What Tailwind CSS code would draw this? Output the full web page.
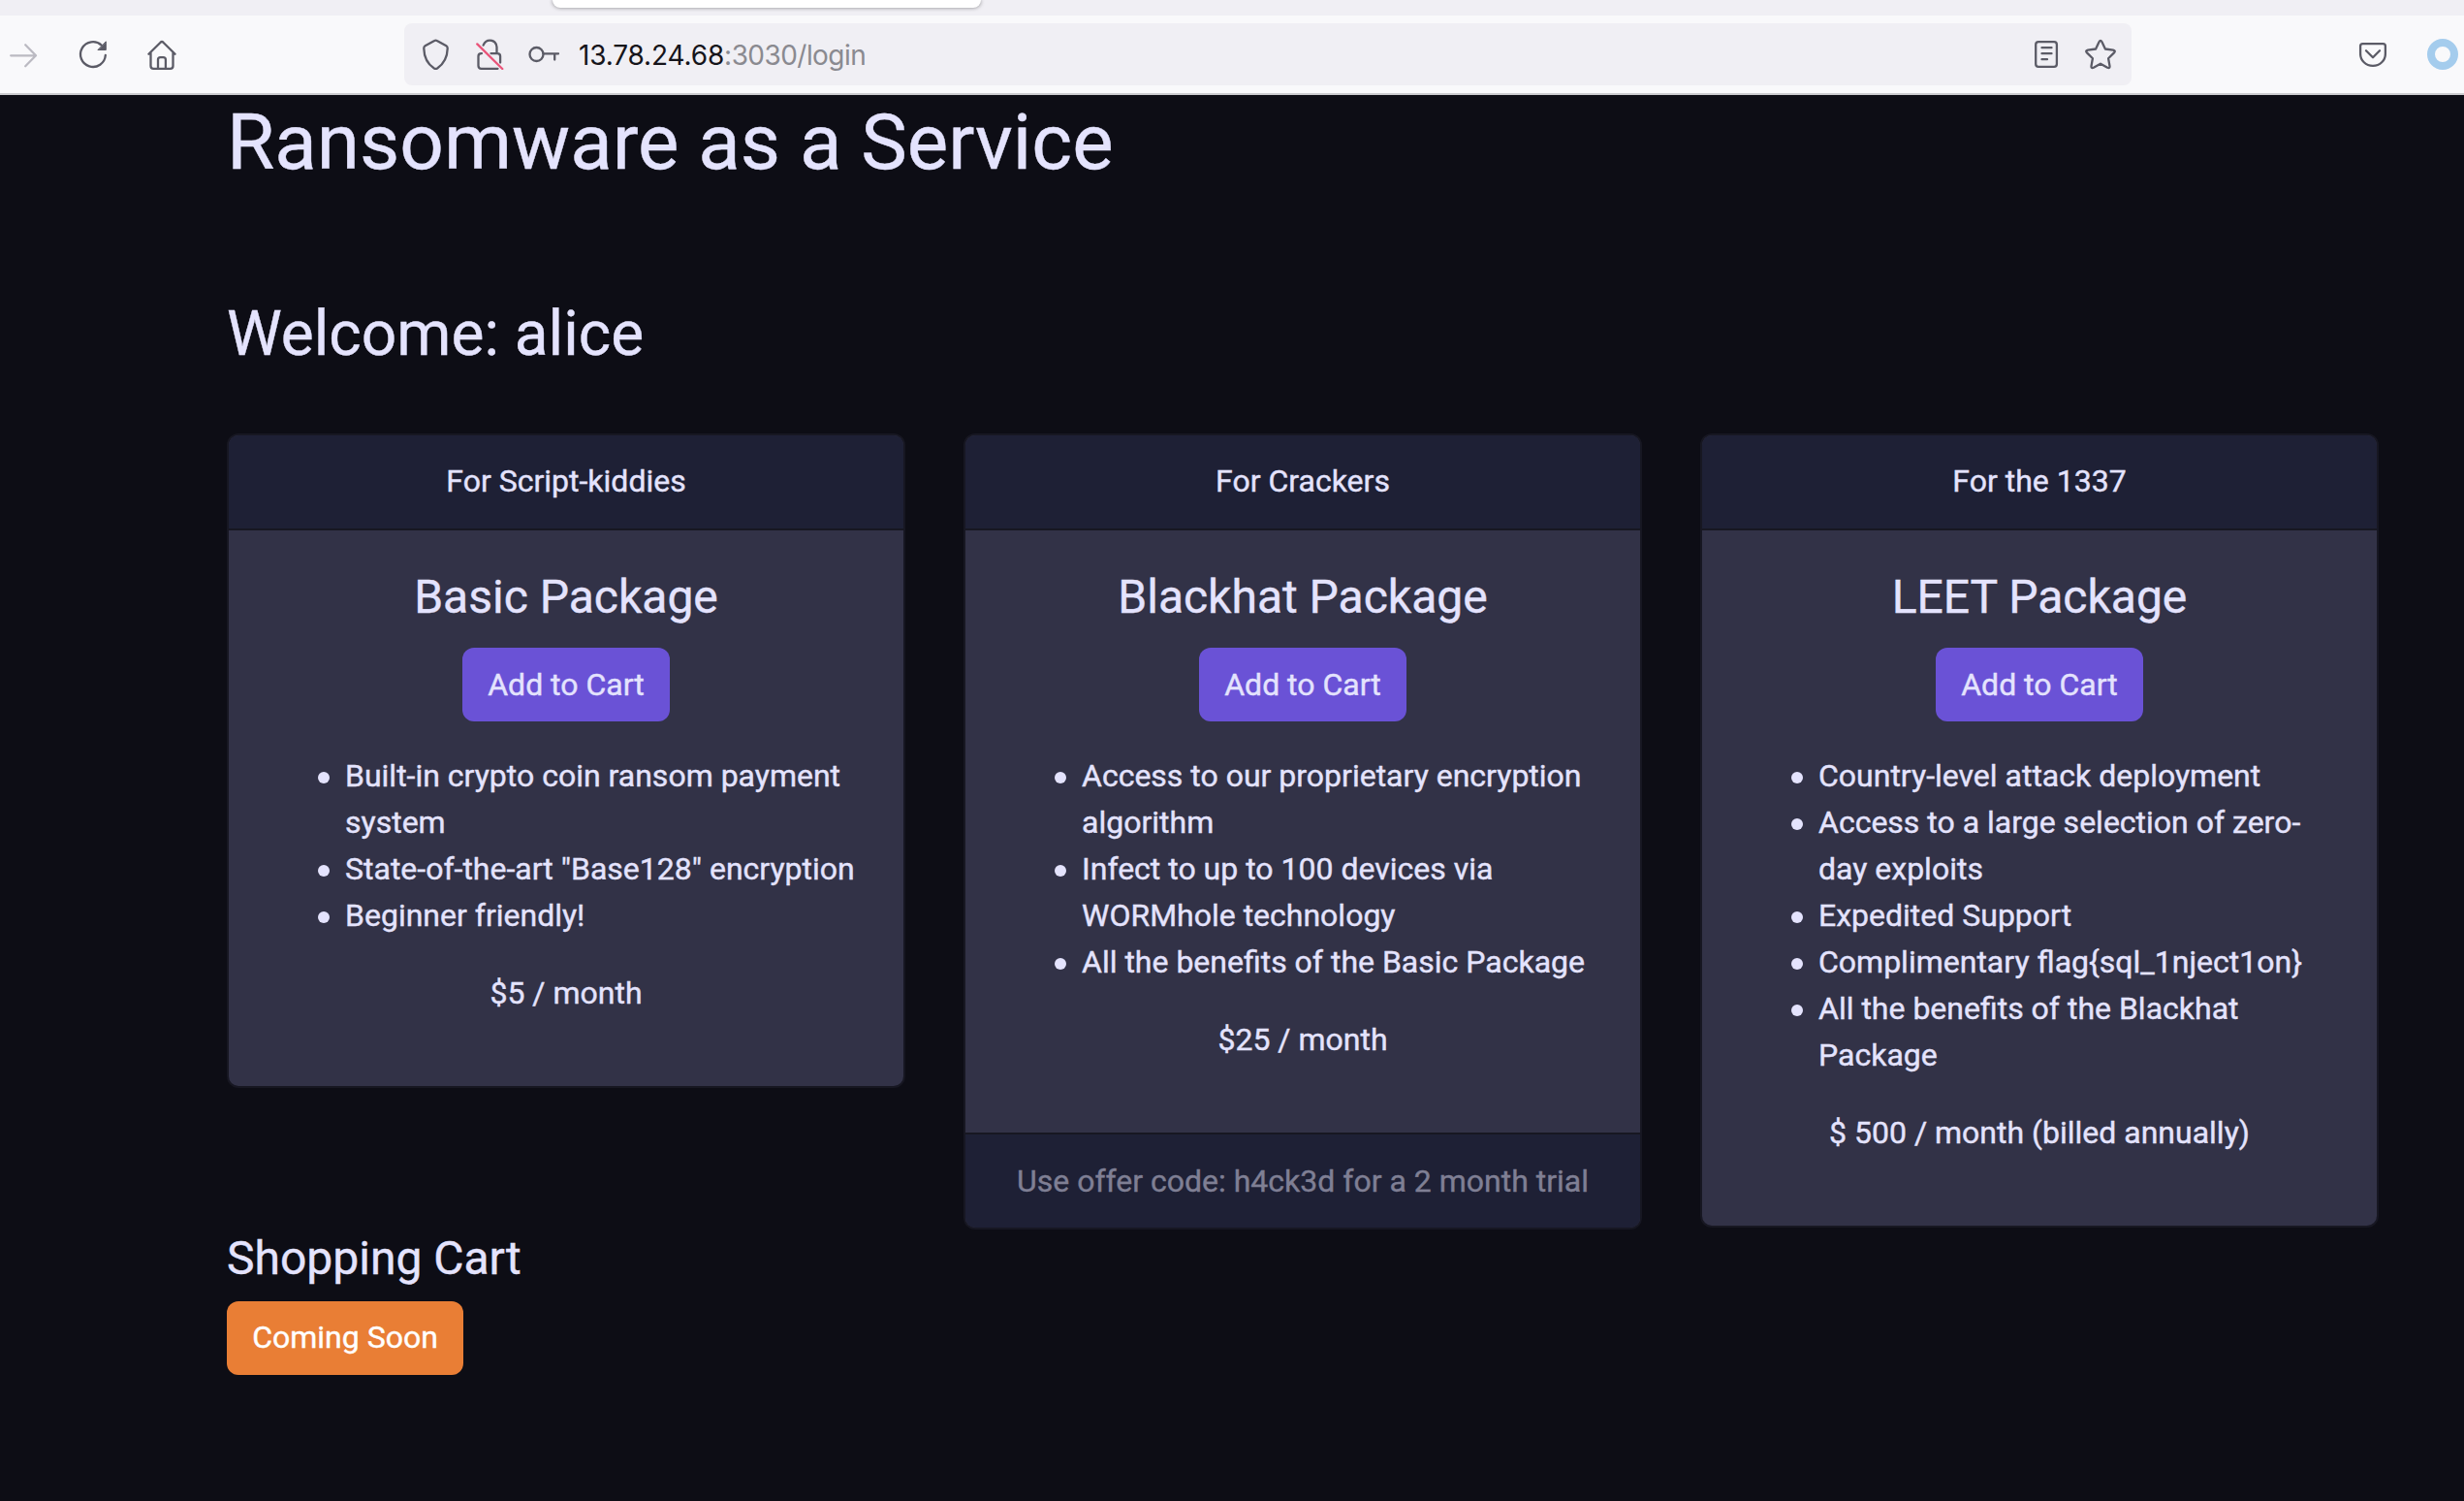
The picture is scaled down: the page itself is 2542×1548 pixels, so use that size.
<!DOCTYPE html>
<html lang="en">
<head>
<meta charset="utf-8">
<title>Ransomware as a Service</title>
<script src="https://cdn.jsdelivr.net/npm/@tailwindcss/browser@4"></script>
</head>
<body class="h-[1548px] w-[2542px] overflow-hidden bg-[#0d0d15] font-['Roboto',sans-serif] text-[32px] leading-[48px] text-[#e4e3fd]">

<!-- Browser chrome -->
<header class="border-b-2 border-[#cccccf] bg-[#f9f9fb] font-['Inter',sans-serif]">
  <div class="h-4 bg-[#f0eff4] pl-[570px]">
    <div class="h-2 w-[442px] rounded-b-lg bg-white shadow-[0_0_4px_rgba(0,0,0,0.45)]"></div>
  </div>
  <nav class="flex h-20 items-center pl-2 text-[#5b5b66]">
    <svg class="size-8 shrink-0 text-[#bbbac2]" viewBox="0 0 32 32" fill="none" stroke="currentColor" stroke-width="2.3" stroke-linecap="round" stroke-linejoin="round"><path d="M3.2 17.3h25.6M18.2 6.3l10.8 11-10.8 11"/></svg>
    <svg class="ml-10 size-8 shrink-0" viewBox="0 0 32 32" fill="none" stroke="currentColor" stroke-width="2.3" stroke-linecap="round"><path d="M28.8 17A12.9 12.9 0 1 1 24.7 6.6"/><path d="M29.3 3.2v8.3h-8z" fill="currentColor" stroke-width="1"/></svg>
    <svg class="ml-[39px] size-8 shrink-0" viewBox="0 0 32 32" fill="none" stroke="currentColor" stroke-width="2.3" stroke-linecap="round" stroke-linejoin="round"><path d="M2.4 15.8 14.6 3.7q1.4-1.3 2.8 0L29.6 15.8M4.5 14v14q0 2.8 2.8 2.8h17.4q2.8 0 2.8-2.8V14M12 30.5V21.6q0-2.5 2.5-2.5h2.9q2.5 0 2.5 2.5v8.9"/></svg>
    <div class="ml-[234px] flex h-16 w-[1782px] items-center rounded-lg bg-[#f0eff4] pr-4 pl-4">
      <svg class="size-8 shrink-0" viewBox="0 0 32 32" fill="none" stroke="currentColor" stroke-width="2.3" stroke-linejoin="round"><path d="M15.2 2q1.3-.8 2.6 0L27.400 7.2q1.4.8 1.3 2.7c-.2 9.600-3.600 15.600-10.600 20.600q-1.600 1-3.200 0C7.400 25.500 4.500 19.500 4.300 9.900q-.1-1.900 1.300-2.700z"/></svg>
      <svg class="ml-6 size-8 shrink-0" viewBox="0 0 32 32" fill="none" stroke="currentColor" stroke-width="2.3" stroke-linecap="round" stroke-linejoin="round"><path d="M9.600 6.600C11 3 13.500 1.600 16.500 1.600c4 0 7 3 7 7v6.200M8 15.100H7.500q-3 0-3 3v9.700q0 3 3 3h17M17.500 15.100h6.600q3 0 3 3v6.400"/><path d="M3.300 5.400 29.300 31" stroke="#e9557a"/></svg>
      <svg class="ml-6 size-8 shrink-0" viewBox="0 0 32 32" fill="none" stroke="currentColor" stroke-width="2.3" stroke-linecap="round" stroke-linejoin="round"><circle cx="8.500" cy="16" r="7"/><path d="M15.500 15.300h15.500M27.200 15.300v6.200"/></svg>
      <p class="ml-5 flex-1 pt-0.5 text-[28px] leading-none tracking-[-0.55px] text-[#8a8a90]"><span class="tracking-[-0.15px] text-[#15141a]">13.78.24.68</span>:3030/login</p>
      <svg class="size-8 shrink-0" viewBox="0 0 32 32" fill="none" stroke="currentColor" stroke-width="2.3" stroke-linecap="round"><rect x="5.200" y="3.100" width="21.700" height="25.700" rx="2.800"/><path d="M11.500 9.200h10M11.500 15.200h10M11.500 21.200h5.500"/></svg>
      <svg class="ml-6 size-8 shrink-0" viewBox="0 0 32 32" fill="none" stroke="currentColor" stroke-width="2.3" stroke-linejoin="round"><path d="M14.500 3.200q1.500-2.600 3 0l3.400 7.300 8.200 1.100q2.800.7.900 2.800l-5.900 5.800 1.400 7.900q.2 2.700-2.300 1.600L16 25.700l-7.200 4q-2.500 1.100-2.300-1.600l1.400-7.900L2 14.400q-1.900-2.100.9-2.800l8.200-1.100z"/></svg>
    </div>
    <svg class="ml-[233px] size-8 shrink-0" viewBox="0 0 32 32" fill="none" stroke="currentColor" stroke-width="2.3" stroke-linecap="round" stroke-linejoin="round"><path d="M5.500 5.200h21q2.400 0 2.400 2.400v7.800c0 7-5.600 12.400-12.900 12.400S3.100 22.400 3.100 15.400V7.600q0-2.400 2.400-2.400z"/><path d="m9 12.200 7 7 7-7"/></svg>
    <span class="ml-10 size-8 shrink-0 rounded-full border-8 border-[#a4cced]"></span>
  </nav>
</header>

<!-- Page -->
<main class="pt-px pl-[234px] [-webkit-text-stroke:0.4px]">
  <h1 class="text-[80px] leading-[96px]">Ransomware as a Service</h1>
  <h2 class="mt-28 text-[64px] leading-[76.8px]">Welcome: alice</h2>

  <div class="mt-[63px] flex items-start gap-[60px] text-center">
    <section class="w-[700px] overflow-hidden rounded-xl border-2 border-[#171722] bg-[#323247]">
      <div class="border-b-2 border-[#171722] bg-[#1e2035] pt-[23.5px] pb-[24.5px]">For Script-kiddies</div>
      <div class="px-10 pt-10 pb-[72.5px]">
        <h3 class="text-[48px] leading-[57.6px]">Basic Package</h3>
        <button class="mx-auto mt-6 block h-[76px] w-[214px] rounded-xl bg-[#6a52d6] pb-px">Add to Cart</button>
        <ul class="mt-[31.5px] mb-8 pl-[52px] text-left">
          <li class="flex gap-4"><span class="mt-5 size-3 shrink-0 rounded-full bg-[#e4e3fd]"></span>Built-in crypto coin ransom payment system</li>
          <li class="flex gap-4"><span class="mt-5 size-3 shrink-0 rounded-full bg-[#e4e3fd]"></span>State-of-the-art "Base128" encryption</li>
          <li class="flex gap-4"><span class="mt-5 size-3 shrink-0 rounded-full bg-[#e4e3fd]"></span>Beginner friendly!</li>
        </ul>
        <p>$5 / month</p>
      </div>
    </section>

    <section class="w-[700px] overflow-hidden rounded-xl border-2 border-[#171722] bg-[#323247]">
      <div class="border-b-2 border-[#171722] bg-[#1e2035] pt-[23.5px] pb-[24.5px]">For Crackers</div>
      <div class="px-10 pt-10 pb-[72.5px]">
        <h3 class="text-[48px] leading-[57.6px]">Blackhat Package</h3>
        <button class="mx-auto mt-6 block h-[76px] w-[214px] rounded-xl bg-[#6a52d6] pb-px">Add to Cart</button>
        <ul class="mt-[31.5px] mb-8 pl-[52px] text-left">
          <li class="flex gap-4"><span class="mt-5 size-3 shrink-0 rounded-full bg-[#e4e3fd]"></span>Access to our proprietary encryption algorithm</li>
          <li class="flex gap-4"><span class="mt-5 size-3 shrink-0 rounded-full bg-[#e4e3fd]"></span>Infect to up to 100 devices via WORMhole technology</li>
          <li class="flex gap-4"><span class="mt-5 size-3 shrink-0 rounded-full bg-[#e4e3fd]"></span>All the benefits of the Basic Package</li>
        </ul>
        <p>$25 / month</p>
      </div>
      <div class="border-t-2 border-[#171722] bg-[#1e2035] pt-[23.5px] pb-[24.5px] text-[#7f7f94]">Use offer code: h4ck3d for a 2 month trial</div>
    </section>

    <section class="w-[700px] overflow-hidden rounded-xl border-2 border-[#171722] bg-[#323247]">
      <div class="border-b-2 border-[#171722] bg-[#1e2035] pt-[23.5px] pb-[24.5px]">For the 1337</div>
      <div class="px-10 pt-10 pb-[72.5px]">
        <h3 class="text-[48px] leading-[57.6px]">LEET Package</h3>
        <button class="mx-auto mt-6 block h-[76px] w-[214px] rounded-xl bg-[#6a52d6] pb-px">Add to Cart</button>
        <ul class="mt-[31.5px] mb-8 pl-[52px] text-left">
          <li class="flex gap-4"><span class="mt-5 size-3 shrink-0 rounded-full bg-[#e4e3fd]"></span>Country-level attack deployment</li>
          <li class="flex gap-4"><span class="mt-5 size-3 shrink-0 rounded-full bg-[#e4e3fd]"></span>Access to a large selection of zero-day exploits</li>
          <li class="flex gap-4"><span class="mt-5 size-3 shrink-0 rounded-full bg-[#e4e3fd]"></span>Expedited Support</li>
          <li class="flex gap-4"><span class="mt-5 size-3 shrink-0 rounded-full bg-[#e4e3fd]"></span>Complimentary flag{sql_1nject1on}</li>
          <li class="flex gap-4"><span class="mt-5 size-3 shrink-0 rounded-full bg-[#e4e3fd]"></span>All the benefits of the Blackhat Package</li>
        </ul>
        <p>$ 500 / month (billed annually)</p>
      </div>
    </section>
  </div>

  <h3 class="pt-px text-[48px] leading-[57.6px]">Shopping Cart</h3>
  <button class="mt-[15px] block h-[76px] w-[244px] rounded-xl bg-[#e97e35] pb-px text-white">Coming Soon</button>
</main>
</body>
</html>
